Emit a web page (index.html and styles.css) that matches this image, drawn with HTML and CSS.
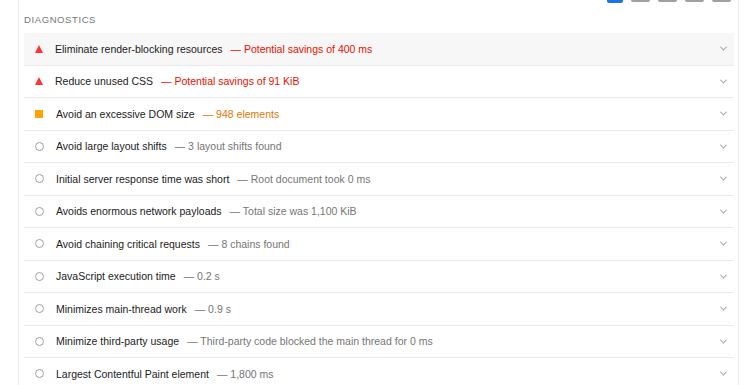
FILE: index.html
```html
<!DOCTYPE html>
<html lang="en">
<head>
    <meta charset="UTF-8">
    <title>Diagnostics</title>
    <link rel="stylesheet" href="styles.css">
</head>
<body>
    <div class="report">
        <div class="tabs">
            <span class="tab active"></span>
            <span class="tab"></span>
            <span class="tab"></span>
            <span class="tab"></span>
            <span class="tab"></span>
        </div>
        <div class="group-title">Diagnostics</div>
        <div class="audits">
            <div class="audit fail hover">
                <span class="icon"></span>
                <span class="title">Eliminate render-blocking resources</span>
                <span class="value">— Potential savings of 400 ms</span>
                <span class="chevron"></span>
            </div>
            <div class="audit fail">
                <span class="icon"></span>
                <span class="title">Reduce unused CSS</span>
                <span class="value">— Potential savings of 91 KiB</span>
                <span class="chevron"></span>
            </div>
            <div class="audit average">
                <span class="icon"></span>
                <span class="title">Avoid an excessive DOM size</span>
                <span class="value">— 948 elements</span>
                <span class="chevron"></span>
            </div>
            <div class="audit info">
                <span class="icon"></span>
                <span class="title">Avoid large layout shifts</span>
                <span class="value">— 3 layout shifts found</span>
                <span class="chevron"></span>
            </div>
            <div class="audit info">
                <span class="icon"></span>
                <span class="title">Initial server response time was short</span>
                <span class="value">— Root document took 0 ms</span>
                <span class="chevron"></span>
            </div>
            <div class="audit info">
                <span class="icon"></span>
                <span class="title">Avoids enormous network payloads</span>
                <span class="value">— Total size was 1,100 KiB</span>
                <span class="chevron"></span>
            </div>
            <div class="audit info">
                <span class="icon"></span>
                <span class="title">Avoid chaining critical requests</span>
                <span class="value">— 8 chains found</span>
                <span class="chevron"></span>
            </div>
            <div class="audit info">
                <span class="icon"></span>
                <span class="title">JavaScript execution time</span>
                <span class="value">— 0.2 s</span>
                <span class="chevron"></span>
            </div>
            <div class="audit info">
                <span class="icon"></span>
                <span class="title">Minimizes main-thread work</span>
                <span class="value">— 0.9 s</span>
                <span class="chevron"></span>
            </div>
            <div class="audit info">
                <span class="icon"></span>
                <span class="title">Minimize third-party usage</span>
                <span class="value">— Third-party code blocked the main thread for 0 ms</span>
                <span class="chevron"></span>
            </div>
            <div class="audit info">
                <span class="icon"></span>
                <span class="title">Largest Contentful Paint element</span>
                <span class="value">— 1,800 ms</span>
                <span class="chevron"></span>
            </div>
        </div>
    </div>
</body>
</html>
```

FILE: styles.css
```css
body {
    margin: 0;
    background-color: #fff;
    font-family: "Liberation Sans", Arial, sans-serif;
    overflow: hidden;
}
.report {
    margin-left: 18px;
    width: 721px;
    height: 385px;
    border-left: 1px solid #ebebeb;
    border-right: 1px solid #ebebeb;
    padding: 0 4px 0 5px;
    box-sizing: border-box;
}
.tabs {
    display: flex;
    justify-content: flex-end;
    gap: 8px;
    height: 3px;
    padding-right: 3px;
}
.tab {
    width: 19px;
    height: 2px;
    background-color: #a0a0a0;
    border-radius: 0 0 2px 2px;
}
.tab.active {
    width: 16px;
    height: 3px;
    margin-left: 1px;
    background-color: #1a73e8;
}
.group-title {
    margin-top: 11px;
    height: 19px;
    font-size: 9.5px;
    letter-spacing: 0.6px;
    text-transform: uppercase;
    color: #757575;
}
.audit {
    display: flex;
    align-items: center;
    height: 31.5px;
    border-bottom: 1px solid #ebebeb;
    font-size: 10.5px;
    color: #212121;
}
.audit.hover {
    background-color: #f7f7f7;
}
.icon {
    width: 9px;
    height: 9px;
    margin: 0 11px 0 11px;
    box-sizing: border-box;
}
.fail .icon {
    width: 0;
    height: 0;
    border-left: 4.5px solid transparent;
    border-right: 4.5px solid transparent;
    border-bottom: 8px solid #ff3333;
}
.average .icon {
    width: 8px;
    height: 8px;
    margin-right: 12px;
    background-color: #ffa400;
}
.info .icon {
    width: 9px;
    height: 9px;
    border: 1px solid #9e9e9e;
    border-radius: 50%;
}
.title {
    margin-left: 1px;
}
.value {
    margin-left: 8px;
    color: #757575;
}
.fail .value {
    color: #eb0f00;
}
.average .value {
    color: #e67700;
}
.chevron {
    margin-left: auto;
    margin-right: 8px;
    width: 4px;
    height: 4px;
    border-right: 1.1px solid #9a9a9a;
    border-bottom: 1.1px solid #9a9a9a;
    transform: rotate(45deg) translate(-1px, -1px);
}
```
